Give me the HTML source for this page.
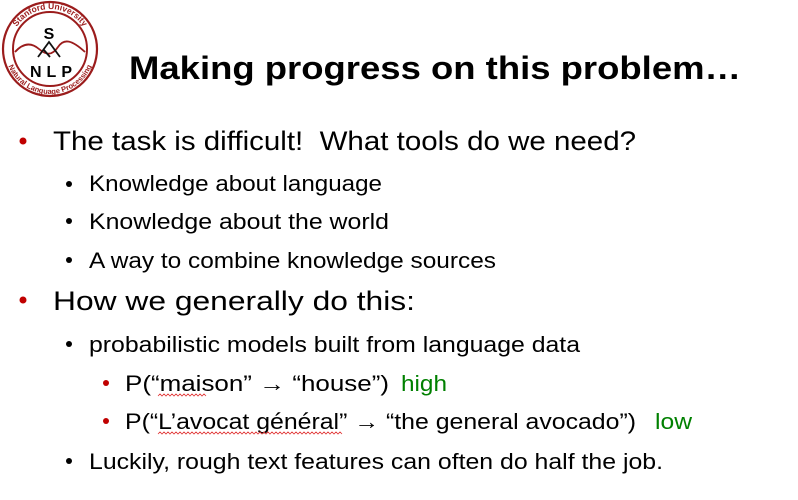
<!DOCTYPE html>
<html><head><meta charset="utf-8"><style>
html,body{margin:0;padding:0;background:#fff;width:798px;height:500px;overflow:hidden}
svg{display:block}
text{font-family:"Liberation Sans",Arial,sans-serif}
</style></head><body>
<svg width="798" height="500" viewBox="0 0 798 500" xmlns="http://www.w3.org/2000/svg">
<defs>
<path id="arcTop" d="M12.4,62.7 A40,40 0 1 1 87.6,62.7"/>
<path id="arcBot" d="M7.7,33.6 A45,45 0 1 0 92.3,33.6"/>
</defs>
<!-- logo -->
<circle cx="50" cy="49" r="47" fill="none" stroke="#9b1c1c" stroke-width="2.2"/>
<circle cx="50" cy="49" r="37" fill="none" stroke="#9b1c1c" stroke-width="2"/>
<text font-size="8.5" font-weight="bold" fill="#9b1c1c"><textPath href="#arcTop" startOffset="50%" text-anchor="middle">Stanford University</textPath></text>
<text font-size="7.5" font-weight="bold" fill="#9b1c1c"><textPath href="#arcBot" startOffset="50%" text-anchor="middle">Natural Language Processing</textPath></text>
<path d="M15,52 C24,42 32,43 39,49 S52,56 58,47 S72,40 85,52" fill="none" stroke="#9b1c1c" stroke-width="1.8"/>
<path d="M38,57 L49,42 L60,57 M44,50 L50,57" fill="none" stroke="#111" stroke-width="1.8"/>
<text x="49" y="39" font-size="16" font-weight="bold" text-anchor="middle">S</text>
<text x="30" y="77" font-size="16" font-weight="bold" textLength="42" lengthAdjust="spacing">NLP</text>
<!-- title -->
<text x="129" y="79" font-size="32" font-weight="bold" textLength="612" lengthAdjust="spacingAndGlyphs">Making progress on this problem…</text>
<!-- bullets -->
<g fill="#c00000"><circle cx="23" cy="141" r="3.5"/><circle cx="23" cy="300" r="3.5"/><circle cx="106" cy="383" r="3"/><circle cx="106" cy="421" r="3"/></g>
<g fill="#000"><circle cx="69" cy="184" r="3"/><circle cx="69" cy="221" r="3"/><circle cx="69" cy="260" r="3"/><circle cx="69" cy="344" r="3"/><circle cx="69" cy="461" r="3"/></g>
<g font-size="27">
<text x="53" y="150" textLength="583" lengthAdjust="spacingAndGlyphs" xml:space="preserve">The task is difficult!  What tools do we need?</text>
<text x="53" y="310" textLength="362" lengthAdjust="spacingAndGlyphs">How we generally do this:</text>
</g>
<g font-size="22">
<text x="89" y="191" textLength="293" lengthAdjust="spacingAndGlyphs">Knowledge about language</text>
<text x="89" y="229" textLength="300" lengthAdjust="spacingAndGlyphs">Knowledge about the world</text>
<text x="89" y="268" textLength="407" lengthAdjust="spacingAndGlyphs">A way to combine knowledge sources</text>
<text x="89" y="352" textLength="491" lengthAdjust="spacingAndGlyphs">probabilistic models built from language data</text>
<text x="125" y="391" textLength="264" lengthAdjust="spacingAndGlyphs">P(“maison” → “house”)</text>
<text x="401" y="391" fill="#008000" textLength="46" lengthAdjust="spacingAndGlyphs">high</text>
<text x="125" y="429" textLength="511" lengthAdjust="spacingAndGlyphs">P(“L’avocat général” → “the general avocado”)</text>
<text x="655" y="429" fill="#008000" textLength="37" lengthAdjust="spacingAndGlyphs">low</text>
<text x="89" y="469" textLength="574" lengthAdjust="spacingAndGlyphs">Luckily, rough text features can often do half the job.</text>
</g>
<!-- squiggles -->
<g fill="none" stroke="#e03030" stroke-width="0.8">
<path d="M158,396 l2,-2 l2,2 l2,-2 l2,2 l2,-2 l2,2 l2,-2 l2,2 l2,-2 l2,2 l2,-2 l2,2 l2,-2 l2,2 l2,-2 l2,2 l2,-2 l2,2 l2,-2 l2,2 l2,-2 l2,2 l2,-2 l2,2"/>
<path d="M158,434 l2,-2 l2,2 l2,-2 l2,2 l2,-2 l2,2 l2,-2 l2,2 l2,-2 l2,2 l2,-2 l2,2 l2,-2 l2,2 l2,-2 l2,2 l2,-2 l2,2 l2,-2 l2,2 l2,-2 l2,2 l2,-2 l2,2 l2,-2 l2,2 l2,-2 l2,2 l2,-2 l2,2 l2,-2 l2,2 l2,-2 l2,2 l2,-2 l2,2 l2,-2 l2,2 l2,-2 l2,2 l2,-2 l2,2 l2,-2 l2,2 l2,-2 l2,2 l2,-2 l2,2 l2,-2 l2,2 l2,-2 l2,2 l2,-2 l2,2 l2,-2 l2,2 l2,-2 l2,2 l2,-2 l2,2 l2,-2 l2,2 l2,-2 l2,2 l2,-2 l2,2 l2,-2 l2,2 l2,-2 l2,2 l2,-2 l2,2 l2,-2 l2,2 l2,-2 l2,2 l2,-2 l2,2 l2,-2 l2,2 l2,-2 l2,2 l2,-2 l2,2 l2,-2 l2,2 l2,-2 l2,2 l2,-2 l2,2 l2,-2 l2,2"/>
</g>
</svg>
</body></html>
